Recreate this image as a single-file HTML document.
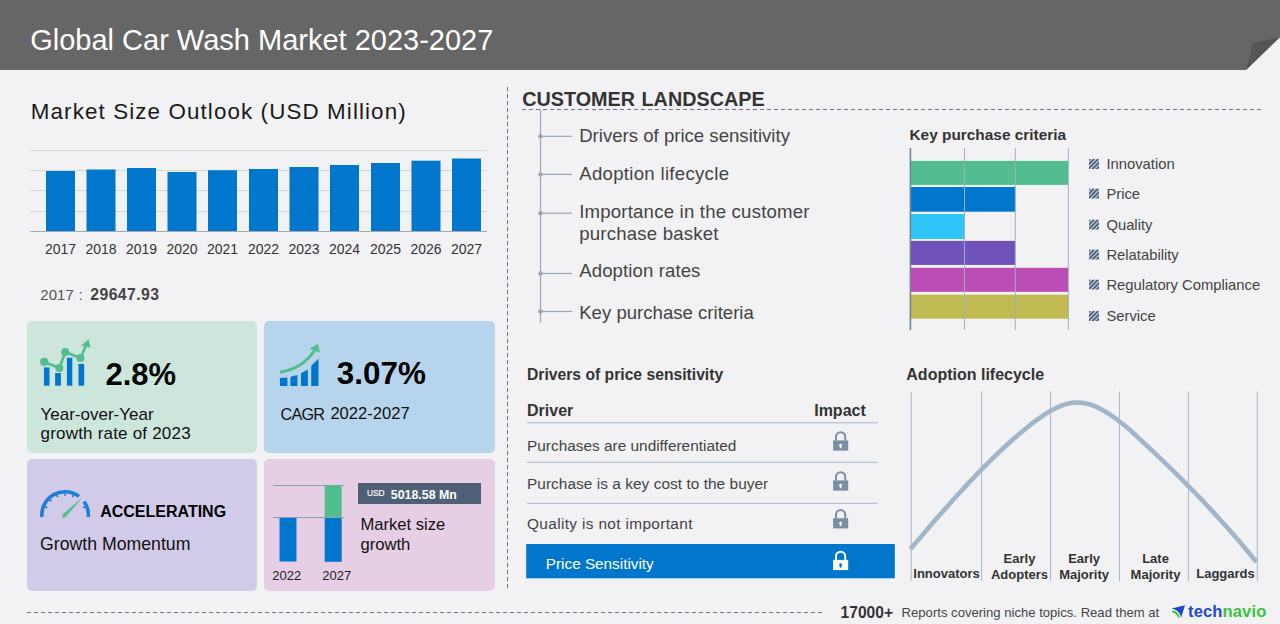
<!DOCTYPE html>
<html><head><meta charset="utf-8">
<style>
*{margin:0;padding:0;box-sizing:border-box}
html,body{width:1280px;height:624px;overflow:hidden;background:#f2f2f4;font-family:"Liberation Sans",sans-serif;color:#333}
.a{position:absolute;white-space:nowrap;line-height:1}
.b{font-weight:bold}
</style></head><body>
<!-- header -->
<svg class="a" style="left:0;top:0" width="1280" height="72" viewBox="0 0 1280 72">
  <polygon points="0,0 1280,0 1280,37 1246,70 0,70" fill="#666666"/>
  <polygon points="1246,70 1253,43 1280,37" fill="#555555"/>
</svg>
<div class="a" id="title" style="left:30.2px;top:25.5px;font-size:29px;color:#fff">Global Car Wash Market 2023-2027</div>

<!-- market size outlook -->
<div class="a" id="mso" style="left:30.8px;top:101px;font-size:22.4px;color:#1a1a1a;letter-spacing:1.1px">Market Size Outlook (USD Million)</div>
<svg class="a" style="left:0;top:140px" width="500" height="100">
  <g stroke="#d4d4d8" stroke-width="1">
    <line x1="30" y1="10.5" x2="487" y2="10.5"/>
    <line x1="30" y1="30.5" x2="487" y2="30.5"/>
    <line x1="30" y1="50.5" x2="487" y2="50.5"/>
    <line x1="30" y1="71.5" x2="487" y2="71.5"/>
  </g>
  <g fill="#0077cc">
    <rect x="46" y="31" width="29" height="60"/>
    <rect x="86.5" y="29.5" width="29" height="61.5"/>
    <rect x="127" y="28" width="29" height="63"/>
    <rect x="167.5" y="32" width="29" height="59"/>
    <rect x="208" y="30.2" width="29" height="60.8"/>
    <rect x="249" y="29" width="29" height="62"/>
    <rect x="289.5" y="27" width="29" height="64"/>
    <rect x="330" y="25" width="29" height="66"/>
    <rect x="371" y="23" width="29" height="68"/>
    <rect x="411.5" y="20.7" width="29" height="70.3"/>
    <rect x="452" y="18.5" width="29" height="72.5"/>
  </g>
  <line x1="30" y1="91.5" x2="487" y2="91.5" stroke="#a8a8ac" stroke-width="1"/>
</svg>
<div class="a" style="left:-1px;top:242px;font-size:14px;color:#333;width:500px">
  <span class="a" style="left:46px;width:29px;text-align:center;display:inline-block">2017</span>
  <span class="a" style="left:86.5px;width:29px;text-align:center">2018</span>
  <span class="a" style="left:127px;width:29px;text-align:center">2019</span>
  <span class="a" style="left:167.5px;width:29px;text-align:center">2020</span>
  <span class="a" style="left:208px;width:29px;text-align:center">2021</span>
  <span class="a" style="left:249px;width:29px;text-align:center">2022</span>
  <span class="a" style="left:289.5px;width:29px;text-align:center">2023</span>
  <span class="a" style="left:330px;width:29px;text-align:center">2024</span>
  <span class="a" style="left:371px;width:29px;text-align:center">2025</span>
  <span class="a" style="left:411.5px;width:29px;text-align:center">2026</span>
  <span class="a" style="left:452px;width:29px;text-align:center">2027</span>
</div>
<div class="a" style="left:40.2px;top:287px;font-size:15px;color:#555;letter-spacing:0.1px">2017</div><div class="a" style="left:78.4px;top:287.4px;font-size:15px;color:#555">:</div>
<div class="a b" style="left:90.3px;top:286.8px;font-size:15.8px;color:#444;letter-spacing:0.4px">29647.93</div>

<!-- cards -->
<div class="a" style="left:27px;top:321px;width:230px;height:131.5px;background:#cce6dc;border-radius:5px"></div>
<div class="a" style="left:264.3px;top:321px;width:230.5px;height:131.5px;background:#b6d4eb;border-radius:5px"></div>
<div class="a" style="left:27px;top:459px;width:230px;height:131.6px;background:#d1cae8;border-radius:5px"></div>
<div class="a" style="left:264.3px;top:459px;width:230.5px;height:131.6px;background:#e6cee5;border-radius:5px"></div>

<div class="a b" style="left:105.5px;top:358.8px;font-size:31px;color:#000">2.8%</div>
<div class="a" style="left:40.5px;top:405px;font-size:17px;color:#111;line-height:19px">Year-over-Year<br><span style="letter-spacing:0.2px">growth rate of 2023</span></div>
<div class="a b" style="left:336.8px;top:358.3px;font-size:31.4px;color:#000">3.07%</div>
<div class="a" style="left:280.6px;top:406.2px;font-size:16.2px;color:#111;letter-spacing:-0.8px">CAGR</div><div class="a" style="left:330.4px;top:405.8px;font-size:16.6px;color:#111">2022-2027</div>
<div class="a b" style="left:100.2px;top:504px;font-size:16px;color:#000">ACCELERATING</div>
<div class="a" style="left:40px;top:536.3px;font-size:17.7px;color:#111">Growth Momentum</div>
<div class="a" style="left:357.9px;top:483px;width:123px;height:21px;background:#4f5f76"></div>
<div class="a" style="left:367.3px;top:488.9px;font-size:9.3px;color:#fff;transform:scaleX(0.9);transform-origin:0 0;-webkit-text-stroke:0.2px #fff">USD</div>
<div class="a b" style="left:390.8px;top:488.8px;font-size:12.4px;color:#fff">5018.58 Mn</div>
<div class="a" style="left:360.5px;top:514.7px;font-size:16.6px;color:#111;line-height:20.1px">Market size<br>growth</div>
<svg class="a" style="left:264px;top:459px" width="231" height="132">
  <line x1="9" y1="26.5" x2="80" y2="26.5" stroke="#8e9bb0" stroke-width="1"/>
  <rect x="15.5" y="58.5" width="17" height="44" fill="#0077cc"/>
  <rect x="60.7" y="26.3" width="17" height="32" fill="#52be8f"/>
  <rect x="60.7" y="58.3" width="17" height="44.5" fill="#0077cc"/>
  <line x1="9" y1="58.5" x2="80" y2="58.5" stroke="#8e9bb0" stroke-width="1"/>
</svg>
<div class="a" style="left:272.3px;top:568.8px;font-size:13px;color:#222">2022</div>
<div class="a" style="left:322.3px;top:568.8px;font-size:13px;color:#222">2027</div>

<!-- dashed separators -->
<svg class="a" style="left:0;top:0" width="1280" height="624">
  <line x1="507.5" y1="87" x2="507.5" y2="591" stroke="#66768c" stroke-width="1" stroke-dasharray="4.3 2.7"/>
  <line x1="522" y1="109.5" x2="1262" y2="109.5" stroke="#66768c" stroke-width="1" stroke-dasharray="4 3"/>
  <line x1="27" y1="612.5" x2="822" y2="612.5" stroke="#66768c" stroke-width="1" stroke-dasharray="4 3"/>
</svg>

<!-- customer landscape -->
<div class="a b" style="left:522.2px;top:90px;font-size:19.8px;color:#333;word-spacing:1px">CUSTOMER LANDSCAPE</div>
<svg class="a" style="left:0;top:0" width="900" height="330">
  <g stroke="#98a6b8" stroke-width="1.2">
    <line x1="540.5" y1="109.5" x2="540.5" y2="322.6"/>
    <line x1="540" y1="136.3" x2="572" y2="136.3"/>
    <line x1="540" y1="174.4" x2="572" y2="174.4"/>
    <line x1="540" y1="213.2" x2="572" y2="213.2"/>
    <line x1="540" y1="273.5" x2="572" y2="273.5"/>
    <line x1="540" y1="311.5" x2="572" y2="311.5"/>
  </g>
  <g fill="#98a6b8">
    <circle cx="540.5" cy="136.3" r="2.2"/>
    <circle cx="540.5" cy="174.4" r="2.2"/>
    <circle cx="540.5" cy="213.2" r="2.2"/>
    <circle cx="540.5" cy="273.5" r="2.2"/>
    <circle cx="540.5" cy="311.5" r="2.2"/>
  </g>
</svg>
<div class="a" style="left:579.2px;top:127px;font-size:18.6px;color:#444">Drivers of price sensitivity</div>
<div class="a" style="left:579.2px;top:165.3px;font-size:18.6px;color:#444;letter-spacing:0.3px">Adoption lifecycle</div>
<div class="a" style="left:579.2px;top:201px;font-size:18.6px;color:#444;line-height:22.2px;letter-spacing:0.2px">Importance in the customer<br>purchase basket</div>
<div class="a" style="left:579.2px;top:262.4px;font-size:18.6px;color:#444;letter-spacing:0.1px">Adoption rates</div>
<div class="a" style="left:579.2px;top:303.8px;font-size:18.6px;color:#444">Key purchase criteria</div>

<!-- key purchase criteria -->
<div class="a b" style="left:909.5px;top:126.8px;font-size:15.4px;color:#333">Key purchase criteria</div>
<svg class="a" style="left:900px;top:140px" width="180" height="200">
  <rect x="10" y="20.9" width="158.4" height="24" fill="#52be8f"/>
  <rect x="10" y="47" width="105.3" height="24.7" fill="#0077cc"/>
  <rect x="10" y="74" width="54.5" height="25" fill="#2ec4f6"/>
  <rect x="10" y="100.9" width="105.3" height="24" fill="#6f52bc"/>
  <rect x="10" y="127.8" width="158.4" height="24" fill="#bb4db4"/>
  <rect x="10" y="154.7" width="158.4" height="24" fill="#bfba52"/>
  <g stroke="#9fb0c4" stroke-width="1">
    <line x1="964.5" y1="8" x2="964.5" y2="190" transform="translate(-900,0)"/>
    <line x1="1015.3" y1="8" x2="1015.3" y2="190" transform="translate(-900,0)"/>
    <line x1="1068.4" y1="8" x2="1068.4" y2="190" transform="translate(-900,0)"/>
  </g>
  <line x1="10.4" y1="8" x2="10.4" y2="190" stroke="#6f84a0" stroke-width="1.6"/>
</svg>
<svg class="a" style="left:1080px;top:150px" width="40" height="180">
<svg x="9" y="9" width="10" height="10"><rect width="10" height="10" fill="#b8c8de"/><g stroke="#4a5566" stroke-width="1.6"><line x1="-15.44" y1="12" x2="-3.44" y2="0"/><line x1="-11.20" y1="12" x2="0.80" y2="0"/><line x1="-6.96" y1="12" x2="5.04" y2="0"/><line x1="-2.72" y1="12" x2="9.28" y2="0"/><line x1="1.52" y1="12" x2="13.52" y2="0"/><line x1="5.76" y1="12" x2="17.76" y2="0"/><line x1="10.00" y1="12" x2="22.00" y2="0"/></g></svg>
<svg x="9" y="38.5" width="10" height="10"><rect width="10" height="10" fill="#b8c8de"/><g stroke="#4a5566" stroke-width="1.6"><line x1="-15.44" y1="12" x2="-3.44" y2="0"/><line x1="-11.20" y1="12" x2="0.80" y2="0"/><line x1="-6.96" y1="12" x2="5.04" y2="0"/><line x1="-2.72" y1="12" x2="9.28" y2="0"/><line x1="1.52" y1="12" x2="13.52" y2="0"/><line x1="5.76" y1="12" x2="17.76" y2="0"/><line x1="10.00" y1="12" x2="22.00" y2="0"/></g></svg>
<svg x="9" y="69.5" width="10" height="10"><rect width="10" height="10" fill="#b8c8de"/><g stroke="#4a5566" stroke-width="1.6"><line x1="-15.44" y1="12" x2="-3.44" y2="0"/><line x1="-11.20" y1="12" x2="0.80" y2="0"/><line x1="-6.96" y1="12" x2="5.04" y2="0"/><line x1="-2.72" y1="12" x2="9.28" y2="0"/><line x1="1.52" y1="12" x2="13.52" y2="0"/><line x1="5.76" y1="12" x2="17.76" y2="0"/><line x1="10.00" y1="12" x2="22.00" y2="0"/></g></svg>
<svg x="9" y="99.5" width="10" height="10"><rect width="10" height="10" fill="#b8c8de"/><g stroke="#4a5566" stroke-width="1.6"><line x1="-15.44" y1="12" x2="-3.44" y2="0"/><line x1="-11.20" y1="12" x2="0.80" y2="0"/><line x1="-6.96" y1="12" x2="5.04" y2="0"/><line x1="-2.72" y1="12" x2="9.28" y2="0"/><line x1="1.52" y1="12" x2="13.52" y2="0"/><line x1="5.76" y1="12" x2="17.76" y2="0"/><line x1="10.00" y1="12" x2="22.00" y2="0"/></g></svg>
<svg x="9" y="129.5" width="10" height="10"><rect width="10" height="10" fill="#b8c8de"/><g stroke="#4a5566" stroke-width="1.6"><line x1="-15.44" y1="12" x2="-3.44" y2="0"/><line x1="-11.20" y1="12" x2="0.80" y2="0"/><line x1="-6.96" y1="12" x2="5.04" y2="0"/><line x1="-2.72" y1="12" x2="9.28" y2="0"/><line x1="1.52" y1="12" x2="13.52" y2="0"/><line x1="5.76" y1="12" x2="17.76" y2="0"/><line x1="10.00" y1="12" x2="22.00" y2="0"/></g></svg>
<svg x="9" y="161" width="10" height="10"><rect width="10" height="10" fill="#b8c8de"/><g stroke="#4a5566" stroke-width="1.6"><line x1="-15.44" y1="12" x2="-3.44" y2="0"/><line x1="-11.20" y1="12" x2="0.80" y2="0"/><line x1="-6.96" y1="12" x2="5.04" y2="0"/><line x1="-2.72" y1="12" x2="9.28" y2="0"/><line x1="1.52" y1="12" x2="13.52" y2="0"/><line x1="5.76" y1="12" x2="17.76" y2="0"/><line x1="10.00" y1="12" x2="22.00" y2="0"/></g></svg>
</svg>
<div class="a" style="left:1106.4px;top:156.5px;font-size:14.8px;color:#444">Innovation</div>
<div class="a" style="left:1106.4px;top:186.6px;font-size:14.8px;color:#444">Price</div>
<div class="a" style="left:1106.4px;top:217.8px;font-size:14.8px;color:#444">Quality</div>
<div class="a" style="left:1106.4px;top:247.5px;font-size:14.8px;color:#444">Relatability</div>
<div class="a" style="left:1106.4px;top:277.5px;font-size:14.8px;color:#444">Regulatory Compliance</div>
<div class="a" style="left:1106.4px;top:309.3px;font-size:14.8px;color:#444">Service</div>

<!-- drivers table -->
<div class="a b" style="left:527px;top:367.3px;font-size:15.7px;color:#333">Drivers of price sensitivity</div>
<div class="a b" style="left:527px;top:402.5px;font-size:16px;color:#333">Driver</div>
<div class="a b" style="left:814.2px;top:402.5px;font-size:16px;color:#333">Impact</div>
<svg class="a" style="left:0;top:0" width="900" height="600">
  <g stroke="#a9b8cb" stroke-width="1">
    <line x1="527" y1="422.8" x2="878" y2="422.8"/>
    <line x1="527" y1="462.3" x2="878" y2="462.3"/>
    <line x1="527" y1="503.3" x2="878" y2="503.3"/>
  </g>
  <rect x="526.2" y="544" width="368.6" height="34.3" fill="#0077cc"/>
</svg>
<div class="a" style="left:527px;top:438px;font-size:15.4px;color:#444">Purchases are undifferentiated</div>
<div class="a" style="left:527px;top:476.4px;font-size:15.4px;color:#444;letter-spacing:0.05px">Purchase is a key cost to the buyer</div>
<div class="a" style="left:527px;top:516px;font-size:15.4px;color:#444;letter-spacing:0.35px">Quality is not important</div>
<div class="a" style="left:545.8px;top:555.9px;font-size:15.3px;color:#fff">Price Sensitivity</div>

<!-- adoption lifecycle -->
<div class="a b" style="left:906.3px;top:367.3px;font-size:16px;color:#333">Adoption lifecycle</div>
<svg class="a" style="left:0;top:0" width="1280" height="624">
  <g stroke="#a9b8cb" stroke-width="1">
    <line x1="911.2" y1="391.5" x2="911.2" y2="581"/>
    <line x1="981.6" y1="391.5" x2="981.6" y2="581"/>
    <line x1="1050.6" y1="391.5" x2="1050.6" y2="581"/>
    <line x1="1119.5" y1="391.5" x2="1119.5" y2="581"/>
    <line x1="1188.4" y1="391.5" x2="1188.4" y2="581"/>
    <line x1="1257.3" y1="391.5" x2="1257.3" y2="581"/>
  </g>
  <path d="M910.4,549.0 L914.3,544.4 L918.2,539.9 L922.1,535.4 L926.0,530.8 L929.8,526.3 L933.7,521.8 L937.6,517.4 L941.5,513.0 L945.4,508.6 L949.3,504.2 L953.2,499.8 L957.1,495.5 L961.0,491.3 L964.8,487.1 L968.7,482.9 L972.6,478.8 L976.5,474.7 L980.4,470.7 L984.3,466.7 L988.2,462.8 L992.1,459.0 L996.0,455.2 L999.8,451.5 L1003.7,447.8 L1007.6,444.2 L1011.5,440.7 L1015.4,437.3 L1019.3,434.0 L1023.2,430.7 L1027.1,427.5 L1031.0,424.4 L1034.8,421.4 L1038.7,418.6 L1042.6,415.8 L1046.5,413.3 L1050.4,410.9 L1054.3,408.8 L1058.2,407.0 L1062.1,405.4 L1066.0,404.1 L1069.8,403.2 L1073.7,402.6 L1077.6,402.5 L1081.5,402.7 L1085.4,403.3 L1089.3,404.3 L1093.2,405.6 L1097.1,407.2 L1100.9,409.1 L1104.8,411.3 L1108.7,413.7 L1112.6,416.3 L1116.5,419.2 L1120.4,422.2 L1124.3,425.3 L1128.2,428.6 L1132.1,432.0 L1135.9,435.5 L1139.8,439.1 L1143.7,442.7 L1147.6,446.3 L1151.5,450.0 L1155.4,453.6 L1159.3,457.3 L1163.2,461.1 L1167.1,464.8 L1170.9,468.6 L1174.8,472.4 L1178.7,476.3 L1182.6,480.2 L1186.5,484.1 L1190.4,488.1 L1194.3,492.0 L1198.2,496.1 L1202.1,500.2 L1205.9,504.3 L1209.8,508.4 L1213.7,512.6 L1217.6,516.9 L1221.5,521.2 L1225.4,525.5 L1229.3,529.9 L1233.2,534.3 L1237.1,538.8 L1240.9,543.3 L1244.8,547.9 L1248.7,552.5 L1252.6,557.2 L1256.5,562.0" fill="none" stroke="#a3b5c8" stroke-width="4.6" stroke-linejoin="round"/>
</svg>
<div class="a b" style="left:911px;top:567px;width:71px;text-align:center;font-size:13px;color:#333">Innovators</div>
<div class="a b" style="left:985px;top:551px;width:69px;text-align:center;font-size:13px;color:#333;line-height:16px">Early<br>Adopters</div>
<div class="a b" style="left:1049.6px;top:551px;width:69px;text-align:center;font-size:13px;color:#333;line-height:16px">Early<br>Majority</div>
<div class="a b" style="left:1121px;top:551px;width:69px;text-align:center;font-size:13px;color:#333;line-height:16px">Late<br>Majority</div>
<div class="a b" style="left:1191px;top:567px;width:69px;text-align:center;font-size:13px;color:#333">Laggards</div>

<!-- footer -->
<div class="a b" style="left:840.6px;top:604.6px;font-size:15.6px;color:#333">17000+</div>
<div class="a" style="left:901.6px;top:606.4px;font-size:13.1px;color:#444">Reports covering niche topics. Read them at</div>
<div class="a b" style="left:1188px;top:603.6px;font-size:16.6px;color:#1f4bcc;letter-spacing:0.1px">tech<span style="color:#3cc23c">navio</span></div>

<!-- icons -->
<svg class="a" style="left:0;top:0" width="1280" height="624">
  <!-- card1 icon -->
  <g fill="#0077cc">
    <rect x="43.9" y="367.4" width="5.6" height="18.3"/>
    <rect x="55.1" y="373" width="5.8" height="12.7"/>
    <rect x="66.9" y="357.7" width="5.4" height="28"/>
    <rect x="78.5" y="363.9" width="5.7" height="21.8"/>
  </g>
  <g fill="#52be8f" stroke="#52be8f">
    <polyline points="44.2,361.9 59.4,367.9 65.2,352.1 80.4,358.1 86.6,344.2" fill="none" stroke-width="2.7"/>
    <circle cx="44.2" cy="361.9" r="4.1" stroke="none"/>
    <circle cx="59.4" cy="367.9" r="4" stroke="none"/>
    <circle cx="65.2" cy="352.1" r="4" stroke="none"/>
    <circle cx="80.4" cy="358.1" r="4" stroke="none"/>
    <polygon points="88.6,339.2 81.2,345.6 90.4,347.8" stroke="none"/>
  </g>
  <!-- card2 icon -->
  <g fill="#0077cc">
    <polygon points="279.9,386 279.9,378 287.4,377.6 287.4,386"/>
    <polygon points="290.4,386 290.4,376.7 297.4,374.9 297.4,386"/>
    <polygon points="301,386 301,373.2 307.9,369.6 307.9,386"/>
    <polygon points="311.2,386 311.2,365.8 318.5,358.7 318.5,386"/>
  </g>
  <path d="M279.9,372.3 Q302,369 314.5,350.5" fill="none" stroke="#52be8f" stroke-width="3.1"/>
  <polygon points="317.9,343.8 309.6,348.8 319.9,352.6" fill="#52be8f"/>
  <!-- gauge -->
  <path d="M41.89,517.03 A23.3,23.3 0 0 1 78.96,496.27" fill="none" stroke="#1e7fd6" stroke-width="3.6"/>
  <path d="M84.07,501.47 A23.3,23.3 0 0 1 88.31,517.03" fill="none" stroke="#1e7fd6" stroke-width="3.6"/>
  <g stroke="#1e7fd6" stroke-width="1.7"><line x1="45.14" y1="506.73" x2="47.27" y2="507.61"/><line x1="49.83" y1="499.73" x2="51.45" y2="501.35"/><line x1="56.83" y1="495.04" x2="57.71" y2="497.17"/><line x1="65.10" y1="493.40" x2="65.10" y2="495.70"/><line x1="73.37" y1="495.04" x2="72.49" y2="497.17"/><line x1="85.06" y1="506.73" x2="82.93" y2="507.61"/></g>
  <path d="M65.6,517.1 L82.8,497.1 L62.8,514.3 Z" fill="#52be8f"/>
  <circle cx="64.2" cy="515.7" r="2" fill="#52be8f"/>
  <!-- locks -->
  <g>
    <path d="M836,440.4 V436.8 A4.6,4.6 0 0 1 845.2,436.8 V440.4" fill="none" stroke="#7a8ca6" stroke-width="2"/>
    <rect x="833.1" y="440.4" width="15.1" height="10.2" fill="#7a8ca6"/>
    <circle cx="840.6" cy="445.3" r="1.5" fill="#fff"/>
    <path d="M840.1,445.3 L839.7,448.2 H841.5 L841.1,445.3Z" fill="#fff"/>
  </g>
  <g transform="translate(0,40)">
    <path d="M836,440.4 V436.8 A4.6,4.6 0 0 1 845.2,436.8 V440.4" fill="none" stroke="#7a8ca6" stroke-width="2"/>
    <rect x="833.1" y="440.4" width="15.1" height="10.2" fill="#7a8ca6"/>
    <circle cx="840.6" cy="445.3" r="1.5" fill="#fff"/>
    <path d="M840.1,445.3 L839.7,448.2 H841.5 L841.1,445.3Z" fill="#fff"/>
  </g>
  <g transform="translate(0,77.8)">
    <path d="M836,440.4 V436.8 A4.6,4.6 0 0 1 845.2,436.8 V440.4" fill="none" stroke="#7a8ca6" stroke-width="2"/>
    <rect x="833.1" y="440.4" width="15.1" height="10.2" fill="#7a8ca6"/>
    <circle cx="840.6" cy="445.3" r="1.5" fill="#fff"/>
    <path d="M840.1,445.3 L839.7,448.2 H841.5 L841.1,445.3Z" fill="#fff"/>
  </g>
  <g transform="translate(0,119.5)">
    <path d="M836,440.4 V436.8 A4.6,4.6 0 0 1 845.2,436.8 V440.4" fill="none" stroke="#fff" stroke-width="2"/>
    <rect x="833.1" y="440.4" width="15.1" height="10.2" fill="#fff"/>
    <circle cx="840.6" cy="445.3" r="1.5" fill="#0077cc"/>
    <path d="M840.1,445.3 L839.7,448.2 H841.5 L841.1,445.3Z" fill="#0077cc"/>
  </g>
  <!-- technavio icon -->
  <path d="M1171.8,608.5 L1185,605.3 L1181.2,617.6 Q1179.5,610 1171.8,608.5Z" fill="#1f45c8"/>
  <path d="M1172.2,610.6 Q1178.5,611 1179.8,617.6 L1178.2,617.8 Q1176.5,612.8 1172.2,612.4Z" fill="#2ecc2e"/>
</svg>
</body></html>
